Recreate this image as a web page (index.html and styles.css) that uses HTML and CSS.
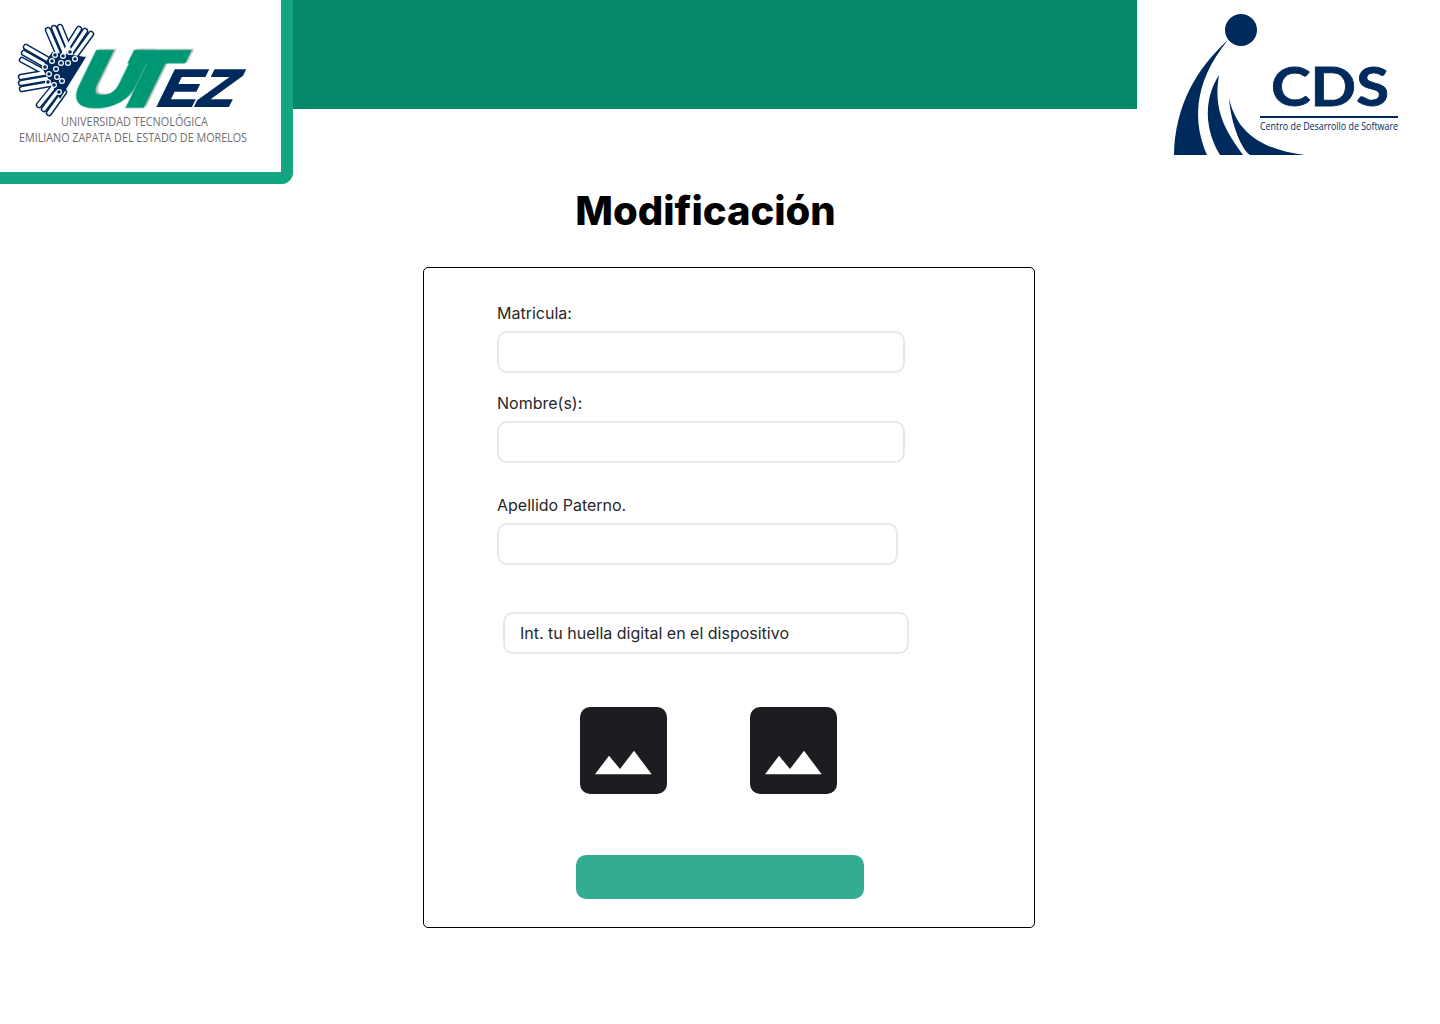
FILE: index.html
```html
<!DOCTYPE html>
<html>

<head>
  <meta charset="utf-8">
  <title>Modificación</title>
  <link rel="stylesheet" href="styles.css">
</head>

<body>
  <header class="top">
    <div class="logo-box">
      <svg class="utez" width="281" height="172" viewBox="0 0 281 172">
        <!-- fingers of the emblem -->
        <g class="finger-out">
          <path d="M48 30 L60 58 M54 28 L66 56 M60 27 L71 54" />
          <path d="M91 34 L72 60 M85 31 L67 58 M79 29 L62 56" />
          <path d="M26 47 L54 63 M24 53 L52 69 M22 60 L50 75" />
          <path d="M21 77 L50 72 M21 83 L50 78 M22 89 L50 84" />
          <path d="M39 105 L56 84 M44 109 L60 88 M49 113 L64 92" />
        </g>
        <g class="finger-in">
          <path d="M48 30 L60 58 M54 28 L66 56 M60 27 L71 54" />
          <path d="M91 34 L72 60 M85 31 L67 58 M79 29 L62 56" />
          <path d="M26 47 L54 63 M24 53 L52 69 M22 60 L50 75" />
          <path d="M21 77 L50 72 M21 83 L50 78 M22 89 L50 84" />
          <path d="M39 105 L56 84 M44 109 L60 88 M49 113 L64 92" />
        </g>
        <polygon class="navy" points="52,52 86,57 60,99 42,68" />
        <g class="nodes">
          <circle cx="55" cy="55" r="2.4" /><circle cx="63" cy="56" r="2.4" /><circle cx="70" cy="52" r="2.4" />
          <circle cx="75" cy="59" r="2.4" /><circle cx="68" cy="63" r="2.4" /><circle cx="61" cy="63" r="2.4" />
          <circle cx="52" cy="61" r="2.4" /><circle cx="45" cy="67" r="2.4" /><circle cx="56" cy="69" r="2.4" />
          <circle cx="49" cy="74" r="2.4" /><circle cx="57" cy="77" r="2.4" /><circle cx="62" cy="81" r="2.4" />
          <circle cx="48" cy="82" r="2.4" /><circle cx="54" cy="85" r="2.4" /><circle cx="59" cy="92" r="2.4" />
        </g>
        <text class="big green" transform="translate(67 105) skewX(-26)" textLength="62" lengthAdjust="spacingAndGlyphs">U</text>
        <text class="big green" transform="translate(109 105) skewX(-26)" textLength="54" lengthAdjust="spacingAndGlyphs">T</text>
        <text class="small-big" transform="translate(154 106) skewX(-26)" textLength="76" lengthAdjust="spacingAndGlyphs">EZ</text>
        <text class="uni" x="61" y="126" textLength="147" lengthAdjust="spacingAndGlyphs">UNIVERSIDAD TECNOLÓGICA</text>
        <text class="uni" x="19" y="142" textLength="228" lengthAdjust="spacingAndGlyphs">EMILIANO ZAPATA DEL ESTADO DE MORELOS</text>
      </svg>
    </div>
    <div class="bar"></div>
    <div class="cds-box">
      <svg width="303" height="184" viewBox="0 0 303 184">
        <circle class="navy" cx="104" cy="30" r="16" />
        <path class="navy" d="M91 40 C60 68 38 105 37 155 L70 155 C57 125 54 85 91 40 Z" />
        <path class="navy" d="M82 75 C66 100 68 130 83 155 L106 155 C88 130 76 110 82 75 Z" />
        <path class="navy" d="M92 98 C94 125 105 150 113 155 L168 155 C128 150 100 135 92 98 Z" />
        <text class="cds" x="134" y="106" textLength="118" lengthAdjust="spacingAndGlyphs">CDS</text>
        <rect class="navy" x="123" y="116" width="138" height="2" />
        <text class="cds-sub" x="123" y="130" textLength="138" lengthAdjust="spacingAndGlyphs">Centro de Desarrollo de Software</text>
      </svg>
    </div>
  </header>

  <h1 class="title">Modificación</h1>

  <main class="card">
    <div class="field">
      <label for="matricula">Matricula:</label>
      <input id="matricula" type="text">
    </div>
    <div class="field field-second">
      <label for="nombre">Nombre(s):</label>
      <input id="nombre" type="text">
    </div>
    <div class="field field-third">
      <label for="paterno">Apellido Paterno.</label>
      <input id="paterno" class="short" type="text">
    </div>

    <input class="huella" type="text" value="Int. tu huella digital en el dispositivo">

    <div class="pics">
      <div class="pic">
        <svg width="87" height="87" viewBox="0 0 87 87">
          <polygon points="15,67.3 29,48.7 40,62 54,43.7 71.7,67.3" fill="#fff" />
        </svg>
      </div>
      <div class="pic">
        <svg width="87" height="87" viewBox="0 0 87 87">
          <polygon points="15,67.3 29,48.7 40,62 54,43.7 71.7,67.3" fill="#fff" />
        </svg>
      </div>
    </div>

    <button class="save" type="button"></button>
  </main>
</body>

</html>
```

FILE: styles.css
```css
body {
  margin: 0;
  background: #fff;
  font-family: Inter, "Liberation Sans", sans-serif;
  color: #27272a;
}

/* header */
.top {
  display: flex;
  align-items: flex-start;
  height: 184px;
}
.logo-box {
  width: 293px;
  height: 184px;
  box-sizing: border-box;
  background: #fff;
  border-right: 12px solid #14a581;
  border-bottom: 12px solid #14a581;
  border-bottom-right-radius: 12px;
}
.utez {
  display: block;
}
.bar {
  flex: 1;
  height: 109px;
  background: #05886a;
}
.cds-box {
  width: 303px;
  height: 184px;
}
.cds-box svg {
  display: block;
}

/* logo parts */
.navy {
  fill: #002a5c;
}
.finger-out path {
  fill: none;
  stroke: #002a5c;
  stroke-width: 6.5;
  stroke-linecap: round;
}
.finger-in path {
  fill: none;
  stroke: #fff;
  stroke-width: 3.6;
  stroke-linecap: round;
}
.nodes circle {
  fill: #002a5c;
  stroke: #fff;
  stroke-width: 1.2;
}
.big {
  font-family: "Liberation Sans", sans-serif;
  font-weight: 700;
  font-size: 77px;
  stroke: #009874;
  stroke-width: 5;
  stroke-linejoin: miter;
  filter: drop-shadow(2px -1px 0 #c4c4c4);
}
.green {
  fill: #009874;
}
.small-big {
  font-family: "Liberation Sans", sans-serif;
  font-weight: 700;
  font-size: 52px;
  fill: #002a5c;
  stroke: #002a5c;
  stroke-width: 2;
}
.uni {
  font-family: "Open Sans", sans-serif;
  font-size: 12px;
  fill: #6f6f6f;
}
.cds {
  font-family: Lato, "Liberation Sans", sans-serif;
  font-weight: 700;
  font-size: 54px;
  fill: #002a5c;
  stroke: #002a5c;
  stroke-width: 0.8;
}
.cds-sub {
  font-family: "Open Sans", sans-serif;
  font-size: 10px;
  fill: #002a5c;
}

/* title */
.title {
  margin: 0;
  padding-right: 29px;
  height: 83px;
  box-sizing: border-box;
  text-align: center;
  font-size: 40px;
  line-height: 53px;
  font-weight: 800;
  color: #000;
}

/* form card */
.card {
  width: 612px;
  box-sizing: border-box;
  margin-left: 423px;
  padding: 36px 0 28px 73px;
  background: #fff;
  border: 1px solid #000;
  border-radius: 5px;
}
.field label {
  display: block;
  margin-bottom: 8px;
  font-size: 16px;
  line-height: 19px;
}
.field-second {
  margin-top: 21px;
}
.field-third {
  margin-top: 33px;
}
input {
  display: block;
  width: 408px;
  height: 42px;
  box-sizing: border-box;
  background: #fff;
  border: 2px solid #e8e8ea;
  border-radius: 10px;
  font-family: inherit;
  font-size: 16px;
  color: #27272a;
}
input.short {
  width: 401px;
}
.huella {
  width: 406px;
  margin: 47px 0 0 6px;
  padding: 0 15px;
}

.pics {
  display: flex;
  gap: 83px;
  margin: 53px 0 0 83px;
}
.pic {
  width: 87px;
  height: 87px;
  background: #1c1c21;
  border-radius: 10px;
}
.pic svg {
  display: block;
}

.save {
  display: block;
  width: 288px;
  height: 44px;
  margin: 61px 0 0 79px;
  background: #33ad91;
  border: 0;
  border-radius: 10px;
}
```
